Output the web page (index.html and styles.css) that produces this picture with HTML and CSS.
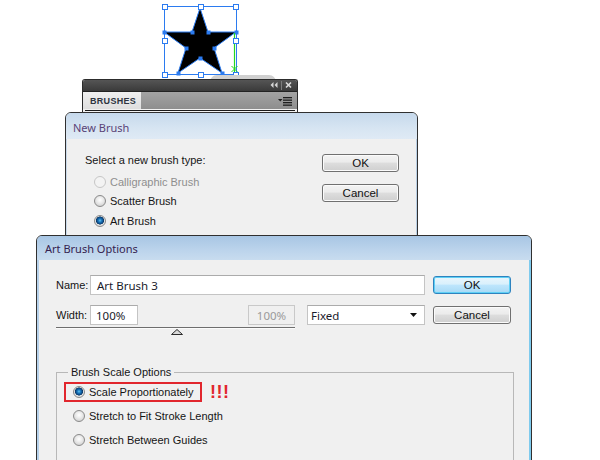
FILE: index.html
```html
<!DOCTYPE html>
<html>
<head>
<meta charset="utf-8">
<title>Art Brush Options</title>
<link rel="stylesheet" href="styles.css">
</head>
<body>
<div class="desk">
  <svg class="art" width="90" height="80" viewBox="0 0 90 80">
    <rect x="4.5" y="6.5" width="72" height="68" fill="none" stroke="#2b7bf0" stroke-width="1"/>
    <polygon points="40,8 48,32 76,32 54,48 62,73 40,58 18,73 26,48 4,32 32,32" fill="#000" stroke="#2b7bf0" stroke-width="1"/>
    <g fill="#2b7bf0">
      <rect x="2.5" y="30.5" width="4" height="4"/>
      <rect x="30.5" y="30.5" width="4" height="4"/>
      <rect x="46.5" y="30.5" width="4" height="4"/>
      <rect x="74.5" y="30.5" width="4" height="4"/>
      <rect x="24.5" y="46.5" width="4" height="4"/>
      <rect x="52.5" y="46.5" width="4" height="4"/>
      <rect x="38.5" y="56.5" width="4" height="4"/>
      <rect x="16.5" y="71.5" width="4" height="4"/>
      <rect x="60.5" y="71.5" width="4" height="4"/>
    </g>
    <line x1="74.5" y1="33" x2="74.5" y2="75" stroke="#22d622" stroke-width="1.2"/>
    <path d="M71.5 66 L77.5 72 M77.5 66 L71.5 72" stroke="#22d622" stroke-width="1"/>
    <g fill="#fff" stroke="#2b7bf0" stroke-width="1">
      <rect x="2.5" y="4.5" width="5" height="5"/>
      <rect x="38.5" y="4.5" width="5" height="5"/>
      <rect x="73.5" y="4.5" width="5" height="5"/>
      <rect x="2.5" y="38.5" width="5" height="5"/>
      <rect x="73.5" y="38.5" width="5" height="5"/>
      <rect x="2.5" y="72.5" width="5" height="5"/>
      <rect x="38.5" y="72.5" width="5" height="5"/>
      <rect x="73.5" y="72.5" width="5" height="5"/>
    </g>
  </svg>

  <div class="blob"></div>

  <div class="panel">
    <div class="panel-title">
      <svg width="24" height="11" viewBox="0 0 24 11">
        <polygon points="3.5,2 3.5,8 0.5,5" fill="#d6d6d6"/>
        <polygon points="7.5,2 7.5,8 4.5,5" fill="#d6d6d6"/>
        <line x1="11.5" y1="1" x2="11.5" y2="10" stroke="#7c7c7c"/>
        <path d="M16 2.5 L21 7.5 M21 2.5 L16 7.5" stroke="#dcdcdc" stroke-width="1.6"/>
      </svg>
    </div>
    <div class="panel-tabs">
      <div class="tab">BRUSHES</div>
      <svg class="menu-icon" width="15" height="9" viewBox="0 0 15 9">
        <polygon points="0,2 4.5,2 2.25,4.5" fill="#1e1e1e"/>
        <rect x="5" y="0" width="9" height="1.3" fill="#1e1e1e"/>
        <rect x="5" y="2.5" width="9" height="1.3" fill="#1e1e1e"/>
        <rect x="5" y="5" width="9" height="1.3" fill="#1e1e1e"/>
        <rect x="5" y="7.5" width="9" height="1.3" fill="#1e1e1e"/>
      </svg>
    </div>
    <div class="panel-strip"><div class="panel-line"></div></div>
  </div>

  <div class="dlg new-brush">
    <div class="dlg-title nb-title">New Brush</div>
    <div class="nb-body">
      <div class="nb-left">
        <div class="nb-label">Select a new brush type:</div>
        <div class="nb-list">
          <div class="nb-row disabled"><span class="radio"></span><span>Calligraphic Brush</span></div>
          <div class="nb-row"><span class="radio"></span><span>Scatter Brush</span></div>
          <div class="nb-row"><span class="radio checked"></span><span>Art Brush</span></div>
        </div>
      </div>
      <div class="btn-col">
        <div class="btn">OK</div>
        <div class="btn">Cancel</div>
      </div>
    </div>
  </div>

  <div class="dlg art-brush">
    <div class="dlg-title ab-title">Art Brush Options</div>
    <div class="ab-body">
      <div class="ab-row">
        <span class="lbl">Name:</span>
        <div class="field name-field">Art Brush 3</div>
        <div class="btn default ok-btn">OK</div>
      </div>
      <div class="ab-row row2">
        <span class="lbl">Width:</span>
        <div class="field w-field">100%</div>
        <div class="field off-field">100%</div>
        <div class="field select-field">
          <span>Fixed</span>
          <svg width="7" height="4" viewBox="0 0 7 4"><polygon points="0,0 7,0 3.5,4" fill="#111"/></svg>
        </div>
        <div class="btn cancel-btn">Cancel</div>
      </div>
      <div class="slider"></div>
      <svg class="thumb" width="12" height="6" viewBox="0 0 12 6">
        <polygon points="0.5,5.5 6,0.5 11.5,5.5" fill="#d9d9d9" stroke="#2a2a2a" stroke-width="1"/>
      </svg>
      <fieldset class="group">
        <legend>Brush Scale Options</legend>
        <div class="opt-line">
          <div class="opt highlight"><span class="radio checked"></span><span>Scale Proportionately</span></div>
          <span class="bang">!!!</span>
        </div>
        <div class="opt"><span class="radio"></span><span>Stretch to Fit Stroke Length</span></div>
        <div class="opt"><span class="radio"></span><span>Stretch Between Guides</span></div>
      </fieldset>
    </div>
  </div>
</div>
</body>
</html>
```

FILE: styles.css
```css
* { box-sizing: border-box; }
html, body { margin: 0; padding: 0; background: #fff; }
body {
  font-family: "Liberation Sans", Arial, sans-serif;
  font-size: 11px;
  color: #151515;
}
.desk {
  position: relative;
  width: 600px;
  height: 460px;
  overflow: hidden;
  background: #fff;
}

/* star artwork */
.art { position: absolute; left: 160px; top: 0; }

.blob {
  position: absolute;
  left: 210px;
  top: 75px;
  width: 66px;
  height: 20px;
  background: #d0d0d0;
  border-radius: 7px 7px 0 0;
}

/* Brushes panel */
.panel {
  position: absolute;
  left: 82px;
  top: 79px;
  width: 216px;
  display: flex;
  flex-direction: column;
  border: 1px solid #2c2c2c;
  border-bottom: none;
  border-radius: 3px 3px 0 0;
  overflow: hidden;
  background: #ededed;
}
.panel-title {
  height: 11px;
  background: linear-gradient(#555, #3a3a3a);
  display: flex;
  justify-content: flex-end;
  align-items: center;
  padding-right: 3px;
}
.panel-tabs {
  height: 18px;
  display: flex;
  align-items: stretch;
  background: linear-gradient(#a3a3a3, #8e8e8e);
  border-top: 1px solid #222;
}
.tab {
  width: 58px;
  background: linear-gradient(#f0f0f0, #dedede);
  font-weight: bold;
  font-size: 9px;
  letter-spacing: 0.3px;
  color: #2e3440;
  display: flex;
  align-items: center;
  padding-left: 7px;
}
.menu-icon { margin-left: auto; margin-right: 4px; align-self: center; margin-top: 1px; }
.panel-strip {
  height: 4px;
  padding: 1px 2px 0 2px;
  background: #f2f2f2;
}
.panel-line { height: 1px; background: #1a1a1a; }

/* dialogs */
.dlg {
  position: absolute;
  background: #f0f0f0;
  border: 1px solid #303030;
  border-radius: 6px 6px 0 0;
  overflow: hidden;
  display: flex;
  flex-direction: column;
}
.dlg-title {
  display: flex;
  align-items: center;
  font-family: "Noto Sans", "Open Sans", sans-serif;
  font-size: 11px;
}
.new-brush {
  left: 65px;
  top: 112px;
  width: 353px;
  height: 130px;
  box-shadow: inset 1px 0 0 #c8d9ea, inset -1px 0 0 #b9cfe4;
}
.nb-title {
  height: 26px;
  padding: 2px 0 0 7px;
  color: #5a4377;
  background: linear-gradient(#c6d9ec, #d7e5f2 60%, #dfeaf5);
}
.nb-body {
  flex: 1;
  display: flex;
  justify-content: space-between;
  align-items: flex-start;
  padding: 14px 18px 0 19px;
}
.nb-label { line-height: 14px; }
.nb-list { margin-top: 5px; padding-left: 9px; display: flex; flex-direction: column; }
.nb-row {
  height: 19.5px;
  display: flex;
  align-items: center;
  gap: 4px;
}
.nb-row.disabled { color: #8e8e8e; }
.nb-row.disabled .radio { border-color: #c6c6c6; background: #f3f3f3; }
.btn-col { margin-top: 1px; display: flex; flex-direction: column; gap: 12px; }

/* buttons */
.btn {
  width: 77px;
  height: 18px;
  border: 1px solid #707070;
  border-radius: 3px;
  background: linear-gradient(#f3f3f3, #ebebeb 45%, #dddddd 50%, #cfcfcf);
  box-shadow: inset 0 0 0 1px #fbfbfb;
  display: flex;
  align-items: center;
  justify-content: center;
  font-size: 11.5px;
  color: #111;
}
.btn.default {
  border-color: #2e83bf;
  background: linear-gradient(#e9f6fd, #d9f0fc 45%, #bee6fd 50%, #a7d9f5);
  box-shadow: inset 0 0 0 1px #5fd0f5;
}

/* radios */
.radio {
  width: 12px;
  height: 12px;
  flex: none;
  border-radius: 50%;
  border: 1px solid #8a8a8a;
  background: radial-gradient(circle at 50% 40%, #ffffff 0, #ececec 3px, #d4d4d4 6px);
}
.radio.checked {
  background: radial-gradient(circle at 50% 45%, #62c7f2 0, #1d7ac0 1.6px, #0c4a86 3.2px, #0a3560 3.8px, #eaeaea 4.3px, #d5d5d5 6px);
}

/* Art Brush dialog */
.art-brush {
  left: 36px;
  top: 235px;
  width: 496px;
  height: 240px;
  box-shadow: inset 2px 0 0 #b6d1ea, inset -2px 0 0 #7fcbee;
}
.ab-title {
  height: 24px;
  padding-left: 8px;
  color: #35224f;
  background: linear-gradient(#a8c6e4, #bcd4ec 60%, #c8dcef);
}
.ab-body {
  padding: 15px 20px 0 19px;
  display: flex;
  flex-direction: column;
  align-items: flex-start;
}
.ab-row {
  display: flex;
  align-items: flex-start;
}
.row2 { margin-top: 10px; }
.lbl { width: 34px; line-height: 20px; }
.field {
  height: 20px;
  background: #fff;
  border: 1px solid #c4c4c4;
  border-top-color: #ababab;
  font-family: "Noto Sans", "Open Sans", sans-serif;
  font-size: 11.5px;
  color: #1b1b2b;
  display: flex;
  align-items: center;
  padding-left: 6px;
}
.name-field { width: 335px; }
.ok-btn { width: 78px; margin-left: 8px; margin-top: 1px; }
.w-field { width: 48px; padding-left: 5px; }
.off-field {
  width: 47px;
  margin-left: 110px;
  background: #f0f0f0;
  border-color: #c9c9c9;
  color: #9a9a9a;
  justify-content: center;
  padding-left: 0;
}
.select-field {
  width: 118px;
  margin-left: 12px;
  padding-left: 3px;
  padding-right: 7px;
  justify-content: space-between;
}
.cancel-btn { width: 78px; margin-left: 8px; margin-top: 1px; }
.slider {
  width: 239px;
  height: 2px;
  margin-top: 2px;
  border-top: 1px solid #6e6e6e;
  background: #fbfbfb;
}
.thumb { margin-left: 115px; margin-top: 0; display: block; }

.group {
  width: 458px;
  margin: 30px 0 0 0;
  padding: 0 0 20px 7px;
  border: 1px solid #b8b8b8;
  min-inline-size: 0;
}
.group legend {
  margin-left: 4px;
  padding: 0 3px;
  line-height: 14px;
  font-size: 11px;
}
.opt-line { display: flex; align-items: center; margin-top: 3px; }
.opt {
  width: 138px;
  height: 20px;
  border: 2px solid transparent;
  padding-left: 7px;
  display: flex;
  align-items: center;
  gap: 4px;
  margin-top: 4px;
  white-space: nowrap;
}
.opt-line .opt { margin-top: 0; }
.opt.highlight { border-color: #e1262d; }
.bang {
  margin-left: 8px;
  color: #e1262d;
  font-weight: bold;
  font-size: 18px;
  line-height: 18px;
  letter-spacing: 0.5px;
}
```
